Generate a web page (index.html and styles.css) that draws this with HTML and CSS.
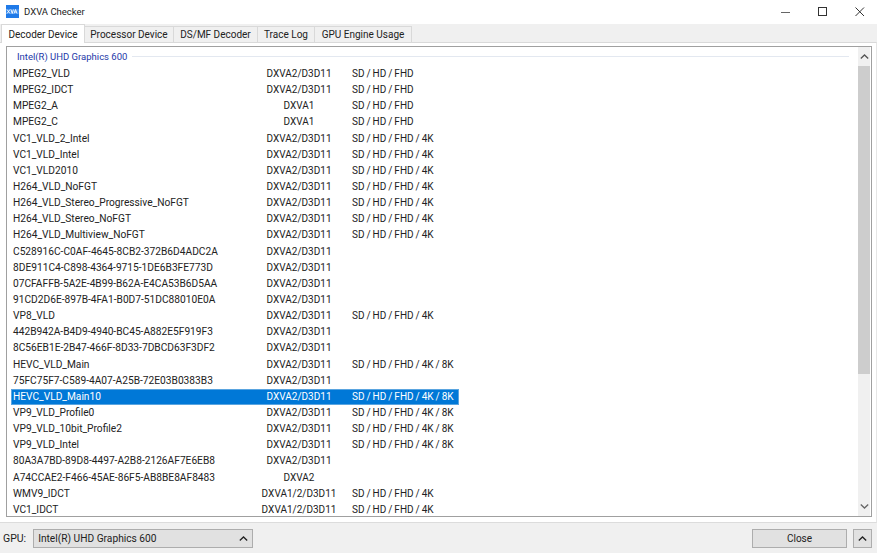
FILE: index.html
```html
<!DOCTYPE html>
<html lang="en">
<head>
<meta charset="utf-8">
<title>DXVA Checker</title>
<link rel="stylesheet" href="styles.css">
</head>
<body>
<div class="window">
  <header class="titlebar">
    <svg class="app-icon" width="13" height="13" viewBox="0 0 13 13"><rect width="13" height="13" fill="#1f7ae8"/><rect y="4" width="13" height="5" fill="#3f90f0"/><path d="M1 4.5l3 4M4 4.5l-3 4M5 4.5l1.2 4 1.2-4M8 8.500l1.500-4 1.500 4M8.700 7h1.600" stroke="#fff" stroke-width=".9" fill="none"/></svg>
    <span class="title">DXVA Checker</span>
    <div class="controls">
      <svg class="ctl" width="10" height="10" viewBox="0 0 10 10"><path d="M0 5.500h9" stroke="#666" stroke-width="1"/></svg>
      <svg class="ctl" width="10" height="10" viewBox="0 0 10 10"><rect x=".5" y=".5" width="8" height="8" fill="none" stroke="#333"/></svg>
      <svg class="ctl" width="10" height="10" viewBox="0 0 10 10"><path d="M.5.500l8.500 8.500M9 .500l-8.500 8.500" stroke="#333" stroke-width="1" fill="none"/></svg>
    </div>
  </header>
  <nav class="tabs">
    <span class="tab active">Decoder Device</span>
    <span class="tab">Processor Device</span>
    <span class="tab">DS/MF Decoder</span>
    <span class="tab">Trace Log</span>
    <span class="tab">GPU Engine Usage</span>
  </nav>
  <main class="panel">
    <div class="listbox">
      <div class="list">
        <div class="group"><span class="group-name">Intel(R) UHD Graphics 600</span><span class="group-line"></span></div>
        <div class="row"><span class="c1">MPEG2_VLD</span><span class="c2">DXVA2/D3D11</span><span class="c3">SD / HD / FHD</span></div>
        <div class="row"><span class="c1">MPEG2_IDCT</span><span class="c2">DXVA2/D3D11</span><span class="c3">SD / HD / FHD</span></div>
        <div class="row"><span class="c1">MPEG2_A</span><span class="c2">DXVA1</span><span class="c3">SD / HD / FHD</span></div>
        <div class="row"><span class="c1">MPEG2_C</span><span class="c2">DXVA1</span><span class="c3">SD / HD / FHD</span></div>
        <div class="row"><span class="c1">VC1_VLD_2_Intel</span><span class="c2">DXVA2/D3D11</span><span class="c3">SD / HD / FHD / 4K</span></div>
        <div class="row"><span class="c1">VC1_VLD_Intel</span><span class="c2">DXVA2/D3D11</span><span class="c3">SD / HD / FHD / 4K</span></div>
        <div class="row"><span class="c1">VC1_VLD2010</span><span class="c2">DXVA2/D3D11</span><span class="c3">SD / HD / FHD / 4K</span></div>
        <div class="row"><span class="c1">H264_VLD_NoFGT</span><span class="c2">DXVA2/D3D11</span><span class="c3">SD / HD / FHD / 4K</span></div>
        <div class="row"><span class="c1">H264_VLD_Stereo_Progressive_NoFGT</span><span class="c2">DXVA2/D3D11</span><span class="c3">SD / HD / FHD / 4K</span></div>
        <div class="row"><span class="c1">H264_VLD_Stereo_NoFGT</span><span class="c2">DXVA2/D3D11</span><span class="c3">SD / HD / FHD / 4K</span></div>
        <div class="row"><span class="c1">H264_VLD_Multiview_NoFGT</span><span class="c2">DXVA2/D3D11</span><span class="c3">SD / HD / FHD / 4K</span></div>
        <div class="row"><span class="c1">C528916C-C0AF-4645-8CB2-372B6D4ADC2A</span><span class="c2">DXVA2/D3D11</span><span class="c3"></span></div>
        <div class="row"><span class="c1">8DE911C4-C898-4364-9715-1DE6B3FE773D</span><span class="c2">DXVA2/D3D11</span><span class="c3"></span></div>
        <div class="row"><span class="c1">07CFAFFB-5A2E-4B99-B62A-E4CA53B6D5AA</span><span class="c2">DXVA2/D3D11</span><span class="c3"></span></div>
        <div class="row"><span class="c1">91CD2D6E-897B-4FA1-B0D7-51DC88010E0A</span><span class="c2">DXVA2/D3D11</span><span class="c3"></span></div>
        <div class="row"><span class="c1">VP8_VLD</span><span class="c2">DXVA2/D3D11</span><span class="c3">SD / HD / FHD / 4K</span></div>
        <div class="row"><span class="c1">442B942A-B4D9-4940-BC45-A882E5F919F3</span><span class="c2">DXVA2/D3D11</span><span class="c3"></span></div>
        <div class="row"><span class="c1">8C56EB1E-2B47-466F-8D33-7DBCD63F3DF2</span><span class="c2">DXVA2/D3D11</span><span class="c3"></span></div>
        <div class="row"><span class="c1">HEVC_VLD_Main</span><span class="c2">DXVA2/D3D11</span><span class="c3">SD / HD / FHD / 4K / 8K</span></div>
        <div class="row"><span class="c1">75FC75F7-C589-4A07-A25B-72E03B0383B3</span><span class="c2">DXVA2/D3D11</span><span class="c3"></span></div>
        <div class="row selected"><span class="c1">HEVC_VLD_Main10</span><span class="c2">DXVA2/D3D11</span><span class="c3">SD / HD / FHD / 4K / 8K</span></div>
        <div class="row"><span class="c1">VP9_VLD_Profile0</span><span class="c2">DXVA2/D3D11</span><span class="c3">SD / HD / FHD / 4K / 8K</span></div>
        <div class="row"><span class="c1">VP9_VLD_10bit_Profile2</span><span class="c2">DXVA2/D3D11</span><span class="c3">SD / HD / FHD / 4K / 8K</span></div>
        <div class="row"><span class="c1">VP9_VLD_Intel</span><span class="c2">DXVA2/D3D11</span><span class="c3">SD / HD / FHD / 4K / 8K</span></div>
        <div class="row"><span class="c1">80A3A7BD-89D8-4497-A2B8-2126AF7E6EB8</span><span class="c2">DXVA2/D3D11</span><span class="c3"></span></div>
        <div class="row"><span class="c1">A74CCAE2-F466-45AE-86F5-AB8BE8AF8483</span><span class="c2">DXVA2</span><span class="c3"></span></div>
        <div class="row"><span class="c1">WMV9_IDCT</span><span class="c2">DXVA1/2/D3D11</span><span class="c3">SD / HD / FHD / 4K</span></div>
        <div class="row"><span class="c1">VC1_IDCT</span><span class="c2">DXVA1/2/D3D11</span><span class="c3">SD / HD / FHD / 4K</span></div>
      </div>
      <div class="scrollbar">
        <svg class="arrow" width="9" height="5" viewBox="0 0 9 5"><path d="M.8 4.500l3.700-3.500 3.700 3.500" fill="none" stroke="#555" stroke-width="1.300"/></svg>
        <div class="thumb"></div>
        <div class="track"></div>
        <svg class="arrow" width="9" height="5" viewBox="0 0 9 5"><path d="M.8.500l3.700 3.500 3.700-3.500" fill="none" stroke="#666" stroke-width="1.300"/></svg>
      </div>
    </div>
  </main>
  <footer class="footer">
    <span class="gpu-label">GPU:</span>
    <div class="select"><span>Intel(R) UHD Graphics 600</span>
      <svg width="9" height="5" viewBox="0 0 9 5"><path d="M.8 4.500l3.700-3.500 3.700 3.500" fill="none" stroke="#222" stroke-width="1.300"/></svg>
    </div>
    <div class="button close">Close</div>
    <div class="button more"><svg width="9" height="5" viewBox="0 0 9 5"><path d="M.8 4.500l3.700-3.500 3.700 3.500" fill="none" stroke="#222" stroke-width="1.300"/></svg></div>
  </footer>
</div>
</body>
</html>
```
FILE: styles.css
```css
* { box-sizing: border-box; }
html, body { margin: 0; padding: 0; }
body { width: 877px; height: 553px; overflow: hidden; background: #f0f0f0; font-family: Roboto, "Open Sans", sans-serif; font-size: 10px; color: #222; }
.window { width: 877px; height: 553px; display: flex; flex-direction: column; }
.titlebar { height: 24px; flex: none; background: #fff; display: flex; align-items: center; padding: 0 0 1px 6px; }
.app-icon { flex: none; }
.title { margin-left: 5px; font-size: 9.500px; color: #222; }
.controls { margin-left: auto; display: flex; gap: 27px; padding-right: 12px; align-items: center; }
.ctl { display: block; }
.tabs { height: 18px; flex: none; display: grid; grid-template-columns: 84px 89px 84px 57px 97px; justify-content: start; align-items: end; padding-left: 1px; }
.tab { height: 16px; display: flex; align-items: center; justify-content: center; background: #f0f0f0; border: 1px solid #d9d9d9; border-bottom: 0; border-left: 0; white-space: nowrap; }
.tab.active { height: 19px; background: #fff; border-left: 1px solid #d9d9d9; margin-bottom: -1px; position: relative; z-index: 1; }
.panel { flex: 1; min-height: 0; background: #fff; border-top: 1px solid #d9d9d9; border-bottom: 1px solid #dcdcdc; border-right: 1px solid #e6e6e6; padding: 3px 4px 5px 6px; }
.listbox { height: 100%; border: 1px solid #a0a0a0; display: flex; background: #fff; }
.list { flex: 1; min-width: 0; overflow: hidden; padding-left: 4px; }
.group { height: 19px; display: flex; align-items: center; padding-left: 6px; color: #2438a8; font-size: 9.500px; }
.group-line { flex: 1; height: 1px; background: #e3e8f0; margin: 0 9px 0 5px; }
.row { height: 16.150px; display: flex; align-items: center; width: 448px; white-space: nowrap; line-height: 16px; padding-left: 2px; }
.row.selected { background: #0078d7; color: #fff; outline: 1px solid #5aa5e0; outline-offset: -1px; }
.c1 { width: 243px; flex: none; font-size: 10.200px; }
.c2 { width: 86px; flex: none; text-align: center; }
.c3 { margin-left: 10px; word-spacing: -.5px; }
.scrollbar { width: 12px; margin-right: 1px; flex: none; display: flex; flex-direction: column; align-items: center; background: #f0f0f0; }
.arrow { flex: none; margin: 7px 0; }
.thumb { width: 100%; height: 308px; background: #cdcdcd; }
.track { flex: 1; }
.footer { height: 30px; flex: none; display: flex; align-items: center; padding: 0 5px 0 3px; }
.gpu-label { font-size: 10.500px; }
.select { width: 220px; height: 19px; margin-left: 7px; background: #e1e1e1; border: 1px solid #adadad; display: flex; align-items: center; justify-content: space-between; padding: 0 4px; font-size: 10.200px; }
.button { height: 19px; background: #e1e1e1; border: 1px solid #adadad; display: flex; align-items: center; justify-content: center; }
.close { width: 95px; margin-left: auto; }
.more { width: 19px; margin-left: 6px; }
```
